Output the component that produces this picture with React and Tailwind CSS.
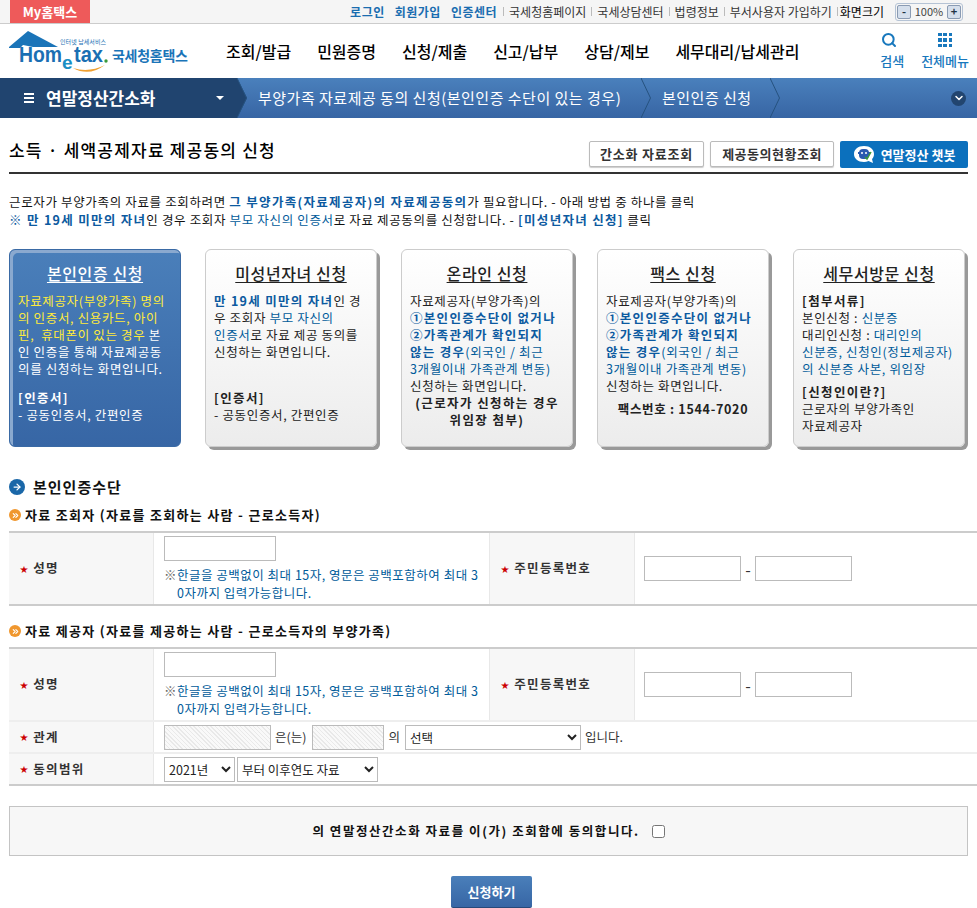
import { Search, ChevronDown, ChevronsRight, ArrowRight } from 'lucide-react';

const topLinks = ['국세청홈페이지', '국세상담센터', '법령정보', '부서사용자 가입하기'];
const navItems = ['조회/발급', '민원증명', '신청/제출', '신고/납부', '상담/제보', '세무대리/납세관리'];

function Logo() {
    return (
        <svg width="182" height="48" viewBox="0 0 182 48" className="shrink-0">
            <path d="M0 20 L19 4 L49 20 L24 20 L14 18 L11 21 L0 21 Z" fill="#1a74b8" />
            <text x="10" y="35" fontFamily="Liberation Sans" fontWeight="700" fontSize="22" fill="#1a6fb3" textLength="43" lengthAdjust="spacingAndGlyphs">Hom</text>
            <text x="53" y="42" fontFamily="Liberation Sans" fontWeight="700" fontSize="19" fill="#1a8fc4">e</text>
            <text x="65" y="35" fontFamily="Liberation Sans" fontWeight="700" fontSize="22" fill="#1a6fb3" textLength="29" lengthAdjust="spacingAndGlyphs">tax</text>
            <circle cx="97" cy="34" r="1.7" fill="#3a9a3a" />
            <path d="M64 41 Q80 50 96 38 Q80 46 64 41 Z" fill="#f0a030" />
            <text x="51" y="17" fontSize="6" fill="#1a6fb3" fontFamily="Noto Sans CJK KR" textLength="46">인터넷 납세서비스</text>
            <text x="103" y="34" fontSize="14" fontWeight="700" fill="#1a74b8" fontFamily="Noto Sans CJK KR" textLength="76">국세청홈택스</text>
        </svg>
    );
}

function Crumb({ dark }) {
    return (
        <svg width="10" height="40" viewBox="0 0 10 40" className="shrink-0">
            {dark && <path d="M0 0 L10 20 L0 40 Z" fill="#20446f" />}
            <path d="M0 0 L9.5 20 L0 40" fill="none" stroke="#26527f" strokeWidth="1" />
        </svg>
    );
}

function TopBar() {
    return (
        <div className="h-6 bg-[#f5f5f5] border-b border-[#ccc] flex items-center pl-2.5 pr-[14px] text-[12px]">
            <div className="w-[80px] h-[23px] bg-[#ee5a5a] text-white font-bold text-[13px] flex items-center justify-center self-start">
                My홈택스
            </div>
            <div className="ml-auto flex items-center">
                <span className="font-bold text-[#1a6db0] tracking-[0.5px] mr-[10px]">로그인</span>
                <span className="font-bold text-[#1a6db0] tracking-[0.5px] mr-[10px]">회원가입</span>
                <span className="font-bold text-[#1a6db0] tracking-[0.5px] mr-[6px]">인증센터</span>
                {topLinks.map((link) => (
                    <span key={link} className="flex items-center">
                        <span className="w-px h-[9px] bg-[#bbb] mr-[5px]" />
                        <span className="text-[#333] mr-[5px]">{link}</span>
                    </span>
                ))}
                <span className="w-px h-[9px] bg-[#bbb] mr-[2px]" />
                <span className="text-black mr-[11px]">화면크기</span>
                <div className="h-[18px] w-[68px] border border-[#b5c3d5] rounded-[3px] flex items-center justify-between px-px bg-[#f5f5f5]">
                    <span className="w-[14px] h-[14px] bg-[#d5dfec] border border-[#8a9bb3] rounded-[2px] flex items-center justify-center leading-none text-[11px] font-bold text-[#234]">-</span>
                    <span className="text-[#444] text-[11px]">100%</span>
                    <span className="w-[14px] h-[14px] bg-[#d5dfec] border border-[#8a9bb3] rounded-[2px] flex items-center justify-center leading-none text-[11px] font-bold text-[#234]">+</span>
                </div>
            </div>
        </div>
    );
}

function Header() {
    return (
        <div className="h-[54px] bg-white flex items-center pl-[9px] relative">
            <Logo />
            <nav className="flex ml-[35px] gap-[26px] text-[16px] font-medium text-black">
                {navItems.map((item) => (
                    <span key={item}>{item}</span>
                ))}
            </nav>
            <div className="ml-auto flex gap-[17px] pr-[8px] text-[#1878bd] text-[13px] font-medium">
                <div className="flex flex-col items-center w-[24px]">
                    <Search size={16} strokeWidth={3} className="mr-[7px]" />
                    <span className="mt-[3px] whitespace-nowrap">검색</span>
                </div>
                <div className="flex flex-col items-center">
                    <div className="grid grid-cols-3 gap-[2px] w-[14px] my-px">
                        {Array.from({ length: 9 }).map((_, i) => (
                            <span key={i} className="w-[3.5px] h-[3.5px] bg-[#1878bd]" />
                        ))}
                    </div>
                    <span className="mt-[3px] whitespace-nowrap">전체메뉴</span>
                </div>
            </div>
        </div>
    );
}

function Breadcrumb() {
    return (
        <div className="h-10 flex items-center text-white text-[15px] tracking-[0.5px] bg-[linear-gradient(#4a80bc,#3765a4)]">
            <div className="w-[237px] h-full bg-[#20446f] flex items-center pl-[24px] pr-[13px] tracking-normal">
                <span className="w-[10px] flex flex-col gap-[2px] mr-[12px]">
                    <span className="h-[2px] bg-white" />
                    <span className="h-[2px] bg-white" />
                    <span className="h-[2px] bg-white" />
                </span>
                <span className="font-bold text-[17px]">연말정산간소화</span>
                <span className="ml-auto w-0 h-0 border-x-[4px] border-x-transparent border-t-[4px] border-t-white" />
            </div>
            <Crumb dark />
            <span className="ml-[11px] w-[363px] whitespace-nowrap">부양가족 자료제공 동의 신청(본인인증 수단이 있는 경우)</span>
            <span className="ml-[20px]"><Crumb /></span>
            <span className="ml-[11px] w-[88px] whitespace-nowrap">본인인증 신청</span>
            <span className="ml-[20px]"><Crumb /></span>
            <span className="ml-auto mr-[11px] w-[15px] h-[15px] rounded-full bg-[#22456f] flex items-center justify-center">
                <ChevronDown size={12} strokeWidth={3} />
            </span>
        </div>
    );
}

function TitleRow() {
    return (
        <div className="mx-[9px] h-[56px] border-b-2 border-[#333] flex items-end justify-between pb-[4px]">
            <h1 className="text-[17px] font-medium text-black leading-none tracking-[1.2px] mb-[10px]">소득 · 세액공제자료 제공동의 신청</h1>
            <div className="flex gap-[6px] items-start">
                <button className="h-[26px] w-[115px] bg-white border border-[#bbb] rounded-[2px] text-[13px] font-bold tracking-[0.8px] text-[#333] shadow-[0_1px_1px_#ccc]">간소화 자료조회</button>
                <button className="h-[26px] w-[124px] bg-white border border-[#bbb] rounded-[2px] text-[13px] font-bold tracking-[0.5px] text-[#333] shadow-[0_1px_1px_#ccc]">제공동의현황조회</button>
                <button className="h-[27px] w-[128px] bg-[#0b70bd] rounded-[2px] text-[13px] font-bold text-white flex items-center justify-center gap-[6px]">
                    <svg width="22" height="20" viewBox="0 0 22 20">
                        <path d="M11 1 C17 1 21 4.5 21 9 C21 11.5 20 13 19 14 L20 18 L15.5 16 C14 16.7 12.5 17 11 17 C5 17 1 13.5 1 9 C1 4.5 5 1 11 1 Z" fill="#fff" />
                        <rect x="6" y="4" width="10" height="10" rx="4" fill="#2a5ab0" />
                        <rect x="5" y="7" width="12" height="2" fill="#2a5ab0" />
                        <circle cx="9" cy="8" r="1" fill="#fff" />
                        <circle cx="13" cy="8" r="1" fill="#fff" />
                        <path d="M12 12 L14 14 L18 7" fill="none" stroke="#3a9a3a" strokeWidth="1.5" />
                    </svg>
                    연말정산 챗봇
                </button>
            </div>
        </div>
    );
}

const B = ({ children }) => <b className="font-bold text-[#0c5aa0] tracking-[1.3px]">{children}</b>;
const L = ({ children }) => <span className="text-[#005b9a]">{children}</span>;
const H = ({ children }) => <b className="font-bold text-[#222] tracking-[1.4px]">{children}</b>;

function Card({ title, active, children }) {
    return (
        <div className={`w-[172px] h-[198px] rounded-[6px] border px-[8px] text-[12.5px] leading-[17px] tracking-[0.65px] shrink-0 whitespace-nowrap ${active
            ? 'border-[#3a6aa5] bg-[linear-gradient(#4a7fba,#3766a5)] text-white shadow-[inset_3px_3px_0_#8aa9cf]'
            : 'border-[#ccc] bg-[linear-gradient(#fff,#ececec)] text-[#222] shadow-[3px_3px_0_#999]'
            }`}>
            <h3 className={`text-[16px] font-medium text-center underline underline-offset-2 tracking-[0.6px] mt-[13px] mb-[9px] leading-[20px] ${active ? 'text-white' : 'text-[#222]'}`}>
                {title}
            </h3>
            {children}
        </div>
    );
}

function Cards() {
    const applyNote = (
        <>
            자료제공자(부양가족)의<br />
            <B>①본인인증수단이 없거나</B><br />
            <B>②가족관계가 확인되지</B><br />
            <B>않는 경우</B><L>(외국인 / 최근</L><br />
            <L>3개월이내 가족관계 변동)</L><br />
            신청하는 화면입니다.
        </>
    );
    return (
        <div className="flex gap-[24px] pl-[9px] mt-[20px]">
            <Card title="본인인증 신청" active>
                <span className="text-[#ffeb3b]">자료제공자(부양가족) 명의<br />의 인증서, 신용카드, 아이<br />핀,&nbsp; 휴대폰이 있는 경우</span> 본<br />
                인 인증을 통해 자료제공동<br />
                의를 신청하는 화면입니다.
                <div className="mt-[12px]">
                    <b className="font-bold tracking-[1.4px]">[인증서]</b><br />
                    - 공동인증서, 간편인증
                </div>
            </Card>
            <Card title="미성년자녀 신청">
                <B>만 19세 미만의 자녀</B>인 경<br />
                우 조회자 <L>부모 자신의</L><br />
                <L>인증서</L>로 자료 제공 동의를<br />
                신청하는 화면입니다.
                <div className="mt-[29px]">
                    <H>[인증서]</H><br />
                    - 공동인증서, 간편인증
                </div>
            </Card>
            <Card title="온라인 신청">
                {applyNote}<br />
                <div className="text-center font-bold tracking-[1.4px]">(근로자가 신청하는 경우<br />위임장 첨부)</div>
            </Card>
            <Card title="팩스 신청">
                {applyNote}
                <div className="text-center font-bold tracking-[0.7px] mt-[6px]">팩스번호 : 1544-7020</div>
            </Card>
            <Card title="세무서방문 신청">
                <H>[첨부서류]</H><br />
                본인신청 : <L>신분증</L><br />
                대리인신청 : <L>대리인의</L><br />
                <L>신분증, 신청인(정보제공자)</L><br />
                <L>의 신분증 사본, 위임장</L>
                <div className="mt-[6px]"><H>[신청인이란?]</H></div>
                근로자의 부양가족인<br />
                자료제공자
            </Card>
        </div>
    );
}

function SubTitle({ children }) {
    return (
        <div className="flex items-center gap-[4px] pl-[9px] h-[16px] text-[13px] font-bold tracking-[1.3px] text-[#111]">
            <span className="w-[12px] h-[12px] rounded-full bg-[#f0972e] flex items-center justify-center text-white">
                <ChevronsRight size={9} strokeWidth={3} />
            </span>
            {children}
        </div>
    );
}

function Label({ children }) {
    return (
        <div className="bg-[#f7f7f7] border-r border-[#e8e8e8] flex items-center pl-[11px] text-[12.5px] font-bold tracking-[1.3px] text-[#333]">
            <span className="text-[#c00] text-[8px] mr-[4px]">★</span>
            {children}
        </div>
    );
}

function NameRow() {
    return (
        <div className="grid grid-cols-[145px_336px_145px_1fr] h-[71px]">
            <Label>성명</Label>
            <div className="pl-[10px] pt-[3px] border-r border-[#e8e8e8] text-[12.5px] leading-[18px] tracking-[0.5px] text-[#005b9a] whitespace-nowrap">
                <input className="block w-[112px] h-[25px] border border-[#bbb] bg-white mb-[5px]" />
                <div className="pl-[13px] -indent-[13px]">
                    <span className="inline-block w-[13px] indent-0 text-[#666]">※</span>한글을 공백없이 최대 15자, 영문은 공백포함하여 최대 3<br />0자까지 입력가능합니다.
                </div>
            </div>
            <Label>주민등록번호</Label>
            <div className="flex items-center pl-[9px] text-[#333]">
                <input className="w-[97px] h-[25px] border border-[#bbb] bg-white" />
                <span className="w-[14px] text-center">-</span>
                <input className="w-[97px] h-[25px] border border-[#bbb] bg-white" />
            </div>
        </div>
    );
}

function Hatched({ className }) {
    return <div className={`h-[25px] border border-[#bbb] bg-[repeating-linear-gradient(45deg,#e9e9e9_0,#e9e9e9_1px,#f9f9f9_1px,#f9f9f9_3px)] ${className}`} />;
}

export default function App() {
    return (
        <div className="h-[908px] overflow-hidden bg-white font-['Noto_Sans_CJK_KR','Liberation_Sans',sans-serif]">
            <TopBar />
            <Header />
            <Breadcrumb />
            <TitleRow />

            <div className="mx-[9px] mt-[19px] text-[12.5px] leading-[18px] tracking-[0.65px] text-[#111] whitespace-nowrap">
                근로자가 부양가족의 자료를 조회하려면 <B>그 부양가족(자료제공자)의 자료제공동의</B>가 필요합니다. - 아래 방법 중 하나를 클릭<br />
                <B>※ 만 19세 미만의 자녀</B>인 경우 조회자 <L>부모 자신의 인증서</L>로 자료 제공동의를 신청합니다. - <B>[미성년자녀 신청]</B> 클릭
            </div>

            <Cards />

            <div className="flex items-center gap-[8px] pl-[9px] mt-[30px] h-[20px] text-[15px] font-bold tracking-[1px] text-[#111]">
                <span className="w-[16px] h-[16px] rounded-full bg-[#1a67a8] flex items-center justify-center text-white">
                    <ArrowRight size={10} strokeWidth={3} />
                </span>
                본인인증수단
            </div>

            <div className="mt-[10px]"><SubTitle>자료 조회자 (자료를 조회하는 사람 - 근로소득자)</SubTitle></div>
            <div className="ml-[9px] mt-[8px] border-t-2 border-b-2 border-[#ccc]">
                <NameRow />
            </div>

            <div className="mt-[17px]"><SubTitle>자료 제공자 (자료를 제공하는 사람 - 근로소득자의 부양가족)</SubTitle></div>
            <div className="ml-[9px] mt-[8px] border-t-2 border-b-2 border-[#ccc]">
                <NameRow />
                <div className="grid grid-cols-[145px_1fr] h-[32px] border-t-2 border-[#eee]">
                    <Label>관계</Label>
                    <div className="flex items-center pl-[10px] text-[12.5px] text-[#333]">
                        <Hatched className="w-[107px]" />
                        <span className="mx-[5px] ml-[4px]">은(는)</span>
                        <Hatched className="w-[72px] ml-px" />
                        <span className="mx-[5px] ml-[4px]">의</span>
                        <select className="w-[176px] h-[25px] border border-[#bbb] bg-white text-[12.5px] text-[#222]">
                            <option>선택</option>
                        </select>
                        <span className="ml-[4px]">입니다.</span>
                    </div>
                </div>
                <div className="grid grid-cols-[145px_1fr] h-[32px] border-t-2 border-[#eee]">
                    <Label>동의범위</Label>
                    <div className="flex items-center pl-[10px] gap-[2px]">
                        <select className="w-[71px] h-[25px] border border-[#bbb] bg-white text-[12.5px] text-[#222]">
                            <option>2021년</option>
                        </select>
                        <select className="w-[141px] h-[25px] border border-[#bbb] bg-white text-[12.5px] text-[#222]">
                            <option>부터 이후연도 자료</option>
                        </select>
                    </div>
                </div>
            </div>

            <div className="mx-[9px] mt-[20px] h-[50px] bg-[#f7f7f7] border border-[#c4c4c4] flex items-center justify-center gap-[12px] text-[12.5px] font-bold tracking-[1.55px] text-[#111]">
                의 연말정산간소화 자료를 이(가) 조회함에 동의합니다.
                <input type="checkbox" className="w-[13px] h-[13px]" />
            </div>

            <div className="flex justify-center pl-[6px] mt-[20px]">
                <button className="w-[81px] h-[32px] rounded-[2px] bg-[linear-gradient(#4a7fba,#3766a5)] border-b border-[#26497a] text-white text-[13px] font-bold">
                    신청하기
                </button>
            </div>
        </div>
    );
}
